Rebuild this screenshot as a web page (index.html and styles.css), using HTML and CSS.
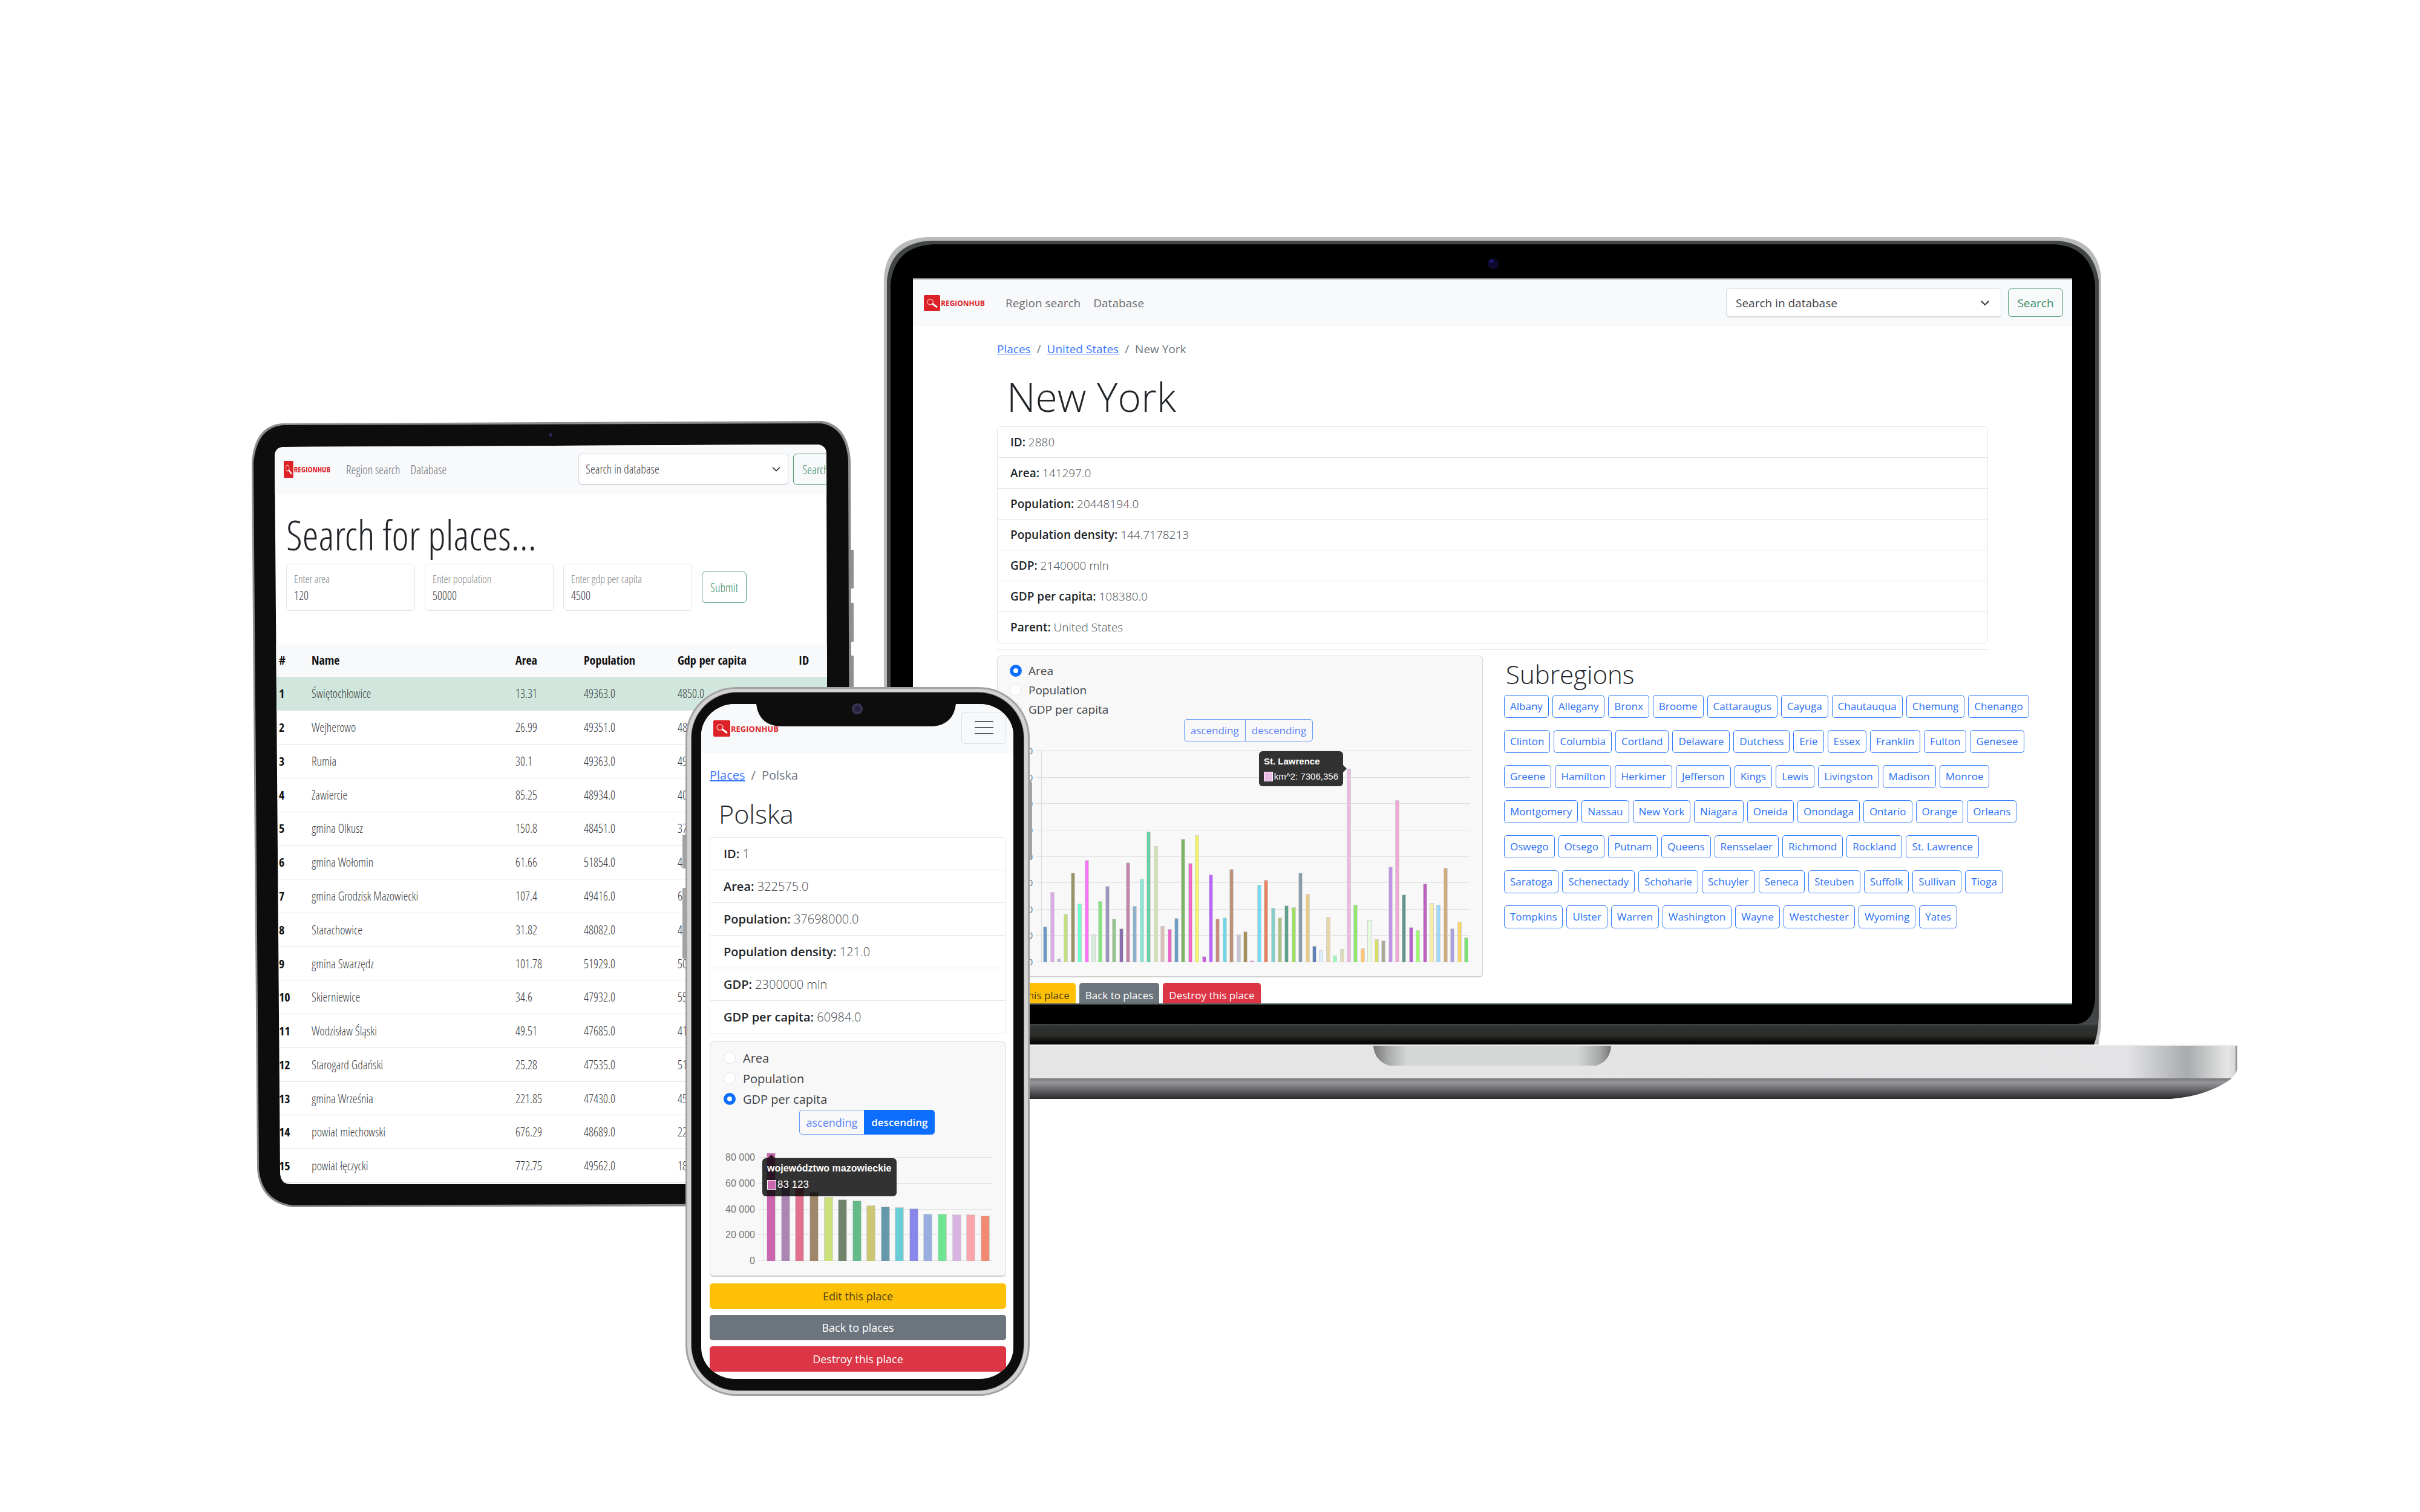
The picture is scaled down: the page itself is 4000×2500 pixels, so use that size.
FILE: index.html
```html
<!DOCTYPE html>
<html lang="en">
<head>
<meta charset="utf-8">
<title>RegionHub</title>
<link rel="stylesheet" href="styles.css">
</head>
<body>
<svg class="defs" width="0" height="0" aria-hidden="true">
  <symbol id="mark" viewBox="0 0 28 28" preserveAspectRatio="none">
    <rect width="28" height="28" rx="2" fill="#dc2127"/>
    <circle cx="11" cy="12" r="5" fill="none" stroke="#f3b9b4" stroke-width="1.4"/>
    <path d="M15 15.500L22 21" stroke="#fff" stroke-width="3" stroke-linecap="round"/>
  </symbol>
</svg>
<main class="stage">

<section class="device laptop">
  <svg class="frame" viewBox="0 0 2240 1426" preserveAspectRatio="none" aria-hidden="true">
    <defs>
      <linearGradient id="hinge" x1="0" y1="0" x2="0" y2="1"><stop offset="0" stop-color="#4c4e4e"/><stop offset=".12" stop-color="#303434"/><stop offset=".55" stop-color="#2b2c26"/><stop offset=".8" stop-color="#0c0c0a"/><stop offset="1" stop-color="#000"/></linearGradient>
      <linearGradient id="deck" x1="0" y1="0" x2="1" y2="0"><stop offset="0" stop-color="#e6e6e6"/><stop offset=".919" stop-color="#e3e3e5"/><stop offset=".963" stop-color="#a8abac"/><stop offset=".993" stop-color="#e6e6e6"/><stop offset=".998" stop-color="#d8d8d8"/><stop offset="1" stop-color="#777"/></linearGradient>
      <linearGradient id="under" x1="0" y1="0" x2="0" y2="1"><stop offset="0" stop-color="#76757a"/><stop offset=".2" stop-color="#96979c"/><stop offset=".5" stop-color="#6f6f72"/><stop offset="1" stop-color="#26282a"/></linearGradient>
      <linearGradient id="thumb" x1="0" y1="0" x2="1" y2="0"><stop offset="0" stop-color="#777"/><stop offset=".06" stop-color="#a8a9a9"/><stop offset=".14" stop-color="#d5d7d6"/><stop offset=".86" stop-color="#d5d7d6"/><stop offset=".95" stop-color="#a8a9a9"/><stop offset="1" stop-color="#777"/></linearGradient>
    </defs>
    <path d="M1 1338V66Q6 4 72 0H1944Q2006 4 2013 66V1300Q2013 1320 2004 1338Z" fill="#b9bab9"/>
    <path d="M6 1338V72Q12 10 78 6H1940Q2000 10 2009 72V1290Q2009 1315 2000 1338Z" fill="#414545"/>
    <rect x="8" y="1300" width="2000" height="37" fill="url(#hinge)"/>
    <path d="M2009 1290Q2009 1315 2000 1338H2009Z" fill="#b9bab9"/>
    <path d="M12 1260V78Q18 16 82 12H1936Q1996 16 2003 78V1260Q2000 1298 1974 1301H40Q12 1296 12 1260Z" fill="#000"/>
    <path d="M49 69H1965" stroke="#8b8389" stroke-width="2"/>
    <path d="M49 1268H1965" stroke="#566161" stroke-width="2"/>
    <ellipse cx="1008" cy="44" rx="9" ry="9" fill="#0d0a2e"/>
    <ellipse cx="1005" cy="40" rx="4" ry="3" fill="#1d1866"/>
    <path d="M0 1336H2238V1376Q2234 1388 2226 1392H0Z" fill="url(#deck)"/>
    <path d="M0 1336H2238" stroke="#f4f0f2" stroke-width="2"/>
    <path d="M0 1391H2229Q2190 1420 2128 1425H0Z" fill="url(#under)"/>
    <path d="M810 1337H1203Q1202 1362 1178 1370H836Q812 1362 810 1337Z" fill="url(#thumb)"/>
  </svg>
  <div class="screen">
    <nav class="nav">
      <a class="brand" href="#"><svg class="mark"><use href="#mark"/></svg>REGIONHUB</a>
      <a class="navlink" href="#">Region search</a>
      <a class="navlink" href="#">Database</a>
      <form class="find">
        <select class="select" aria-label="Search in database"><option>Search in database</option></select>
        <button class="outline green" type="button">Search</button>
      </form>
    </nav>
    <div class="page">
      <nav class="crumbs"><a href="#">Places</a><span>/</span><a href="#">United States</a><span>/</span><span>New York</span></nav>
      <h1 class="title">New York</h1>
      <ul class="facts">
        <li><b>ID:</b> 2880</li>
        <li><b>Area:</b> 141297.0</li>
        <li><b>Population:</b> 20448194.0</li>
        <li><b>Population density:</b> 144.7178213</li>
        <li><b>GDP:</b> 2140000 mln</li>
        <li><b>GDP per capita:</b> 108380.0</li>
        <li><b>Parent:</b> United States</li>
      </ul>
      <hr class="rule">
      <div class="columns">
        <div class="card">
          <label class="pick"><input type="radio" name="l" checked>Area</label>
          <label class="pick"><input type="radio" name="l">Population</label>
          <label class="pick"><input type="radio" name="l">GDP per capita</label>
          <div class="sort"><button type="button">ascending</button><button type="button">descending</button></div>
          <div class="chart">
            <ol class="ticks"><li>8 000</li><li>7 000</li><li>6 000</li><li>5 000</li><li>4 000</li><li>3 000</li><li>2 000</li><li>1 000</li><li>0</li></ol>
            <div class="plot" id="counties"></div>
            <div class="tip"><b>St. Lawrence</b><span><i></i>km^2: 7306,356</span></div>
          </div>
        </div>
        <div class="regions">
          <h2>Subregions</h2>
          <div class="tags"><a href="#">Albany</a><a href="#">Allegany</a><a href="#">Bronx</a><a href="#">Broome</a><a href="#">Cattaraugus</a><a href="#">Cayuga</a><a href="#">Chautauqua</a><a href="#">Chemung</a><a href="#">Chenango</a></div>
          <div class="tags"><a href="#">Clinton</a><a href="#">Columbia</a><a href="#">Cortland</a><a href="#">Delaware</a><a href="#">Dutchess</a><a href="#">Erie</a><a href="#">Essex</a><a href="#">Franklin</a><a href="#">Fulton</a><a href="#">Genesee</a></div>
          <div class="tags"><a href="#">Greene</a><a href="#">Hamilton</a><a href="#">Herkimer</a><a href="#">Jefferson</a><a href="#">Kings</a><a href="#">Lewis</a><a href="#">Livingston</a><a href="#">Madison</a><a href="#">Monroe</a></div>
          <div class="tags"><a href="#">Montgomery</a><a href="#">Nassau</a><a href="#">New York</a><a href="#">Niagara</a><a href="#">Oneida</a><a href="#">Onondaga</a><a href="#">Ontario</a><a href="#">Orange</a><a href="#">Orleans</a></div>
          <div class="tags"><a href="#">Oswego</a><a href="#">Otsego</a><a href="#">Putnam</a><a href="#">Queens</a><a href="#">Rensselaer</a><a href="#">Richmond</a><a href="#">Rockland</a><a href="#">St. Lawrence</a></div>
          <div class="tags"><a href="#">Saratoga</a><a href="#">Schenectady</a><a href="#">Schoharie</a><a href="#">Schuyler</a><a href="#">Seneca</a><a href="#">Steuben</a><a href="#">Suffolk</a><a href="#">Sullivan</a><a href="#">Tioga</a></div>
          <div class="tags"><a href="#">Tompkins</a><a href="#">Ulster</a><a href="#">Warren</a><a href="#">Washington</a><a href="#">Wayne</a><a href="#">Westchester</a><a href="#">Wyoming</a><a href="#">Yates</a></div>
        </div>
      </div>
      <div class="actions"><button class="edit" type="button">Edit this place</button><button class="back" type="button">Back to places</button><button class="destroy" type="button">Destroy this place</button></div>
    </div>
  </div>
</section>

<section class="device tablet">
  <svg class="frame" viewBox="0 0 996 1302" preserveAspectRatio="none" aria-hidden="true">
    <path d="M984 213h11v64h-11zM984 301h11v64h-11zM984 388h11v64h-11z" fill="#8f9090"/>
    <path d="M0 70Q4 8 50 4L942 0Q986 6 990 66L994 1240Q990 1295 940 1298L66 1300Q14 1292 9 1238Z" fill="#8c8d8d"/>
    <path d="M3 70Q8 11 52 7L940 4Q982 9 986 66L990 1240Q986 1291 940 1294L68 1297Q18 1290 12 1238Z" fill="#0d0d0d"/>
    <ellipse cx="494" cy="23" rx="3" ry="3" fill="#25224f"/>
  </svg>
  <div class="screen">
    <nav class="nav">
      <a class="brand" href="#"><svg class="mark"><use href="#mark"/></svg>REGIONHUB</a>
      <a class="navlink" href="#">Region search</a>
      <a class="navlink" href="#">Database</a>
      <form class="find">
        <select class="select" aria-label="Search in database"><option>Search in database</option></select>
        <button class="outline green" type="button">Search</button>
      </form>
    </nav>
    <h1 class="title">Search for places...</h1>
    <form class="query">
      <label class="field">Enter area<input type="text" value="120"></label>
      <label class="field">Enter population<input type="text" value="50000"></label>
      <label class="field">Enter gdp per capita<input type="text" value="4500"></label>
      <button class="outline green" type="button">Submit</button>
    </form>
    <table class="places">
      <colgroup><col class="c-no"><col class="c-name"><col class="c-area"><col class="c-pop"><col class="c-gdp"><col></colgroup>
      <thead><tr><th>#</th><th>Name</th><th>Area</th><th>Population</th><th>Gdp per capita</th><th>ID</th></tr></thead>
      <tbody>
        <tr class="hit"><th>1</th><td>Świętochłowice</td><td>13.31</td><td>49363.0</td><td>4850.0</td><td></td></tr>
        <tr><th>2</th><td>Wejherowo</td><td>26.99</td><td>49351.0</td><td>48</td><td></td></tr>
        <tr><th>3</th><td>Rumia</td><td>30.1</td><td>49363.0</td><td>49</td><td></td></tr>
        <tr><th>4</th><td>Zawiercie</td><td>85.25</td><td>48934.0</td><td>40</td><td></td></tr>
        <tr><th>5</th><td>gmina Olkusz</td><td>150.8</td><td>48451.0</td><td>37</td><td></td></tr>
        <tr><th>6</th><td>gmina Wołomin</td><td>61.66</td><td>51854.0</td><td>4</td><td></td></tr>
        <tr><th>7</th><td>gmina Grodzisk Mazowiecki</td><td>107.4</td><td>49416.0</td><td>6</td><td></td></tr>
        <tr><th>8</th><td>Starachowice</td><td>31.82</td><td>48082.0</td><td>4</td><td></td></tr>
        <tr><th>9</th><td>gmina Swarzędz</td><td>101.78</td><td>51929.0</td><td>50</td><td></td></tr>
        <tr><th>10</th><td>Skierniewice</td><td>34.6</td><td>47932.0</td><td>55</td><td></td></tr>
        <tr><th>11</th><td>Wodzisław Śląski</td><td>49.51</td><td>47685.0</td><td>41</td><td></td></tr>
        <tr><th>12</th><td>Starogard Gdański</td><td>25.28</td><td>47535.0</td><td>51</td><td></td></tr>
        <tr><th>13</th><td>gmina Września</td><td>221.85</td><td>47430.0</td><td>45</td><td></td></tr>
        <tr><th>14</th><td>powiat miechowski</td><td>676.29</td><td>48689.0</td><td>22</td><td></td></tr>
        <tr><th>15</th><td>powiat łęczycki</td><td>772.75</td><td>49562.0</td><td>18</td><td></td></tr>
      </tbody>
    </table>
  </div>
</section>

<section class="device phone">
  <svg class="frame" viewBox="0 0 578 1172" preserveAspectRatio="none" aria-hidden="true">
    <path d="M0 246q0-2 3-2h8v56H0zM0 334q0-2 3-2h8v117H0zM568 156h7q3 0 3 3v122q0 3-3 3h-7z" fill="#a3a3a3"/>
    <rect x="5" y="0" width="569" height="1172" rx="84" fill="#a2a2a2"/>
    <rect x="8" y="3" width="563" height="1166" rx="81" fill="#d3d3d3"/>
    <rect x="14" y="8" width="551" height="1156" rx="76" fill="#8d8d8d"/>
    <rect x="15" y="9" width="549" height="1154" rx="75" fill="#0d0d0d"/>
  </svg>
  <div class="screen">
    <nav class="nav">
      <a class="brand" href="#"><svg class="mark"><use href="#mark"/></svg>REGIONHUB</a>
      <button class="burger" type="button" aria-label="Menu"><span></span><span></span><span></span></button>
    </nav>
    <div class="page">
      <nav class="crumbs"><a href="#">Places</a><span>/</span><span>Polska</span></nav>
      <h1 class="title">Polska</h1>
      <ul class="facts">
        <li><b>ID:</b> 1</li>
        <li><b>Area:</b> 322575.0</li>
        <li><b>Population:</b> 37698000.0</li>
        <li><b>Population density:</b> 121.0</li>
        <li><b>GDP:</b> 2300000 mln</li>
        <li><b>GDP per capita:</b> 60984.0</li>
      </ul>
      <div class="card">
        <label class="pick"><input type="radio" name="p">Area</label>
        <label class="pick"><input type="radio" name="p">Population</label>
        <label class="pick"><input type="radio" name="p" checked>GDP per capita</label>
        <div class="sort"><button type="button">ascending</button><button class="on" type="button">descending</button></div>
        <div class="chart">
          <ol class="ticks"><li>80 000</li><li>60 000</li><li>40 000</li><li>20 000</li><li>0</li></ol>
          <div class="plot" id="voivodeships"></div>
          <div class="tip"><b>województwo mazowieckie</b><span><i></i>83 123</span></div>
        </div>
      </div>
      <div class="actions"><button class="edit" type="button">Edit this place</button><button class="back" type="button">Back to places</button><button class="destroy" type="button">Destroy this place</button></div>
    </div>
  </div>
  <svg class="notch" viewBox="0 0 330 38" preserveAspectRatio="none" aria-hidden="true">
    <path d="M0 0H330Q326 34 292 37H38Q4 34 0 0Z" fill="#0d0d0d"/>
    <circle cx="167" cy="8" r="9" fill="#3a3654"/><circle cx="167" cy="8" r="6" fill="#2a2545"/><circle cx="167" cy="8" r="1" fill="#0b0918"/>
  </svg>
</section>

</main>
<script src="charts.js"></script>
</body>
</html>
```
FILE: charts.js
```js
// Each entry: area in km², bar colour
const counties = [
  [1357,'#6a9ac4'],[2660,'#dfa8e8'],[127,'#b9b9e0'],[1828,'#c3e080'],[3375,'#989468'],[2208,'#6effd0'],[3864,'#fb73fb'],[1050,'#d5eedd'],
  [2308,'#83e680'],[2878,'#9a96bf'],[1656,'#92c68c'],[1276,'#8a6dab'],[3783,'#c285a8'],[2118,'#8eb0cb'],[3158,'#8be5d8'],[4941,'#67cfa6'],
  [4380,'#cfe3b9'],[1367,'#d8c0b8'],[1258,'#e668c2'],[1674,'#6fa0c4'],[4661,'#7fb465'],[3747,'#ef66c4'],[4796,'#f3f46c'],[226,'#cc60dc'],
  [3312,'#bb66fb'],[1638,'#c48e82'],[1692,'#72d6ea'],[3520,'#bb917a'],[1050,'#c6c4d4'],[1158,'#a98f5c'],[72,'#ee94d8'],[2932,'#76dcf5'],
  [3113,'#e5835f'],[2063,'#86cfc8'],[1692,'#adc485'],[2154,'#62a08e'],[2090,'#9bdf5a'],[3375,'#889eac'],[2588,'#e9cb8c'],[615,'#5f7fba'],
  [452,'#dbeefa'],[1710,'#e7d7a6'],[253,'#9bf9b9'],[498,'#dcdab8'],[7306,'#e9bae2'],[2163,'#8de66d'],[525,'#fdc471'],[1602,'#e6fbdb'],
  [869,'#d7de66'],[824,'#aaa898'],[3620,'#c093e6'],[6127,'#f2a8d4'],[2561,'#61958c'],[1330,'#b75fce'],[1213,'#9df970'],[2977,'#bc60c2'],
  [2244,'#f6eca2'],[2172,'#9cd8fb'],[3566,'#d2aa80'],[1276,'#aba0e2'],[1529,'#f8d367'],[941,'#78e26e']
];

// Each entry: GDP per capita, bar colour
const voivodeships = [
  [83123,'#c966ad'],[62000,'#ab86b4'],[58000,'#e26f8e'],[53000,'#a0866b'],[49500,'#cbe27a'],[47600,'#6f8468'],[46500,'#64bb88'],[42700,'#cbc774'],
  [42100,'#6698ac'],[41300,'#6accd6'],[40600,'#8a87ec'],[36400,'#99aee0'],[36400,'#6fe491'],[35600,'#d8b2e0'],[35600,'#f9a5a9'],[35100,'#f08a72']
];

function draw(id, data, top, lines) {
  const plot = document.getElementById(id);
  const grid = document.createElement('div');
  grid.className = 'grid';
  for (let i = 0; i < lines; i++) grid.append(document.createElement('i'));
  plot.append(grid);
  for (const [value, colour] of data) {
    const bar = document.createElement('div');
    bar.className = 'bar';
    bar.style.height = (value / top * 100) + '%';
    bar.style.background = colour;
    plot.append(bar);
  }
}
draw('counties', counties, 8000, 9);
draw('voivodeships', voivodeships, 80000, 5);
```
FILE: styles.css
```css
*{box-sizing:border-box}
body{margin:0;background:#fff;color:#212529;font-family:"Open Sans","Noto Sans",sans-serif;font-size:18px}
h1,h2,ul,ol{margin:0;padding:0;font-weight:300}
ul,ol{list-style:none}
button,input,select{font:inherit;color:inherit}
button{padding:0}
.defs{position:absolute}
.stage{position:relative;min-height:2500px;overflow:hidden}
.device{position:absolute}
.frame{position:absolute;inset:0;width:100%;height:100%;overflow:visible}
.screen{position:relative;height:100%;background:#fff;overflow:hidden}

.nav{display:flex;align-items:center;background:#f8f9fb}
.brand{display:flex;align-items:center;gap:1px;color:#dc2127;font-weight:700;text-decoration:none}
.mark{display:block}
.navlink{color:#6b6d70;text-decoration:none;white-space:nowrap}
.find{display:flex;gap:11px;margin-left:auto}
.select{appearance:none;border:1px solid #d5d9dd;border-bottom-width:2px;border-radius:6px;background:#fff url("data:image/svg+xml,%3Csvg xmlns='http://www.w3.org/2000/svg' viewBox='0 0 16 16'%3E%3Cpath fill='none' stroke='%23343a40' stroke-width='2' stroke-linecap='round' stroke-linejoin='round' d='m2 5 6 6 6-6'/%3E%3C/svg%3E") no-repeat right 18px center/16px 16px;color:#3f4347}
.outline{background:none;border:1px solid;border-radius:6px}
.green{color:#3b8c62;border-color:#4f9a72}
.crumbs{display:flex;gap:10px;color:#6c757d}
.crumbs a{color:#3a76fd}
.facts{border:1px solid #e3e5e7;border-radius:6px}
.facts li{border-bottom:1px solid #e3e5e7;color:#44474a}
.facts li:last-child{border-bottom:0}
.facts b{color:#212529;font-weight:600}
.card{border:1px solid #d9dadb;border-bottom:2px solid #cfcfcf;border-radius:6px;background:#f8f8f8}
.pick{display:flex;align-items:center;color:#3f4347}
.pick input{appearance:none;margin:0;width:20px;height:20px;border:1px solid #e2e4e6;border-radius:50%;background:#fff}
.pick input:checked{border:6px solid #0d6efd}
.sort{display:flex;justify-content:center}
.sort button{border:1px solid #6a9cf8;background:none;color:#5b84f8}
.sort button:first-child{border-radius:5px 0 0 5px}
.sort button:last-child{border-radius:0 5px 5px 0;margin-left:-1px}
.sort .on{background:#0d6efd;border-color:#0d6efd;color:#fff;font-weight:600}
.chart{position:relative;display:flex;gap:14px}
.ticks{display:flex;flex-direction:column;justify-content:space-between;text-align:right;color:#777;font-family:"Liberation Sans",sans-serif;white-space:nowrap}
.ticks li{height:1px;line-height:1px}
.plot{position:relative;flex:1;display:flex;align-items:flex-end;justify-content:space-around;border-left:1px solid #dcdcdc}
.grid{position:absolute;inset:0 0 0 -10px;display:flex;flex-direction:column;justify-content:space-between}
.grid i{height:1px;background:#dedede}
.bar{position:relative;border:1px solid #d3d3d3;border-bottom:0}
.tip{position:absolute;display:flex;flex-direction:column;border-radius:6px;background:rgba(0,0,0,.8);color:#fff;font-family:"Liberation Sans",sans-serif;white-space:nowrap}
.tip span{display:flex;align-items:center;gap:2px}
.tip i{width:15px;height:16px;border:1px solid #fff}
.tip::after{content:"";position:absolute;border:6px solid transparent}
.actions{display:flex}
.actions button{border:0;border-radius:5px;color:#fff}
.actions .edit{background:#ffc107;color:#4d3f12}
.actions .back{background:#6c757d}
.actions .destroy{background:#dc3545}

/* laptop */
.laptop{left:36.5%;top:392px;width:56%;height:1426px;padding:70px 275px 159px 49px;font-size:19px}
.laptop .nav{height:78px;padding:0 15px 0 18px}
.laptop .brand{font-size:12px;margin-right:34px}
.laptop .mark{width:27px;height:26px}
.laptop .navlink{margin-right:21px}
.laptop .select{width:455px;height:48px;padding:0 15px}
.laptop .find .outline{width:91px;height:47px}
.laptop .page{padding:22px 139px 0}
.laptop .crumbs{line-height:30px}
.laptop .title{margin:22px 0 9px 16px;font-size:66px;line-height:82px}
.laptop .facts li{height:51px;line-height:51px;padding-left:21px}
.rule{height:1px;margin:9px 0 10px;border:0;background:#e0e2e4}
.columns{display:grid;grid-template-columns:803px 1fr;gap:35px}
.laptop .card{padding:8px 20px 23px 20px}
.laptop .pick{height:32px;gap:11px}
.laptop .sort{margin-left:28px}
.laptop .sort button{height:37px;padding:0 10px;font-size:17px}
.laptop .chart{height:350px;margin-top:15px}
.laptop .ticks{width:38px;font-size:15px}
.laptop .bar{width:7px}
.laptop .tip{left:412px;top:1px;width:139px;height:58px;padding:8px;font-size:15px;line-height:17px;gap:8px}
.laptop .tip i{background:#e9bae2}
.laptop .tip::after{left:100%;top:23px;border-left-color:rgba(0,0,0,.8)}
.regions h2{margin:6px 0 9px 3px;font-size:42px;line-height:50px}
.tags{display:flex;gap:6px;margin-bottom:20px}
.tags a{height:38px;padding:0 9px;border:1px solid #2f7bfd;border-radius:5px;color:#2a6ff5;font-size:17px;line-height:35px;text-decoration:none;white-space:nowrap}
.laptop .actions{gap:6px;margin-top:9px}
.laptop .actions button{height:40px;padding:0 10px;font-size:17px}

/* tablet */
.tablet{left:10.4%;top:696px;width:24.9%;height:1302px;padding:39px 42px 40px 38px;font-family:"Open Sans Condensed Light","Open Sans",sans-serif;font-size:20px}
.tablet .screen{clip-path:path("M0 20Q0 4 16 4L898 0Q912 2 912 16L915 1223H27Q10 1223 9 1205Z")}
.tablet .nav{height:82px;padding-left:15px}
.tablet .brand{width:77px;font-family:"Open Sans Condensed","Open Sans",sans-serif;font-size:13px;margin-right:26px}
.tablet .mark{width:20px;height:28px}
.tablet .navlink{margin-right:17px}
.tablet .find{gap:8px;margin:0 -15px 0 auto}
.tablet .select{width:347px;height:52px;padding:0 11px;background-size:14px 14px;background-position:right 12px center}
.tablet .outline{width:74px;height:52px}
.tablet .title{margin:25px 0 0 19px;font-size:68px;line-height:84px}
.query{display:flex;align-items:center;gap:16px;margin:6px 0 54px 19px}
.field{display:flex;flex-direction:column;width:213px;height:78px;padding:10px 12px 0;border:1px solid #e1e4e7;border-radius:6px;color:#7d8186;font-size:18px;line-height:28px}
.field input{width:100%;height:28px;padding:0;border:0;background:none;color:#3f4347;font-size:20px}
.places{width:100%;height:892px;border-collapse:collapse;table-layout:fixed}
.places col.c-no{width:54px}
.places col.c-name{width:337px}
.places col.c-area{width:113px}
.places col.c-pop{width:155px}
.places col.c-gdp{width:200px}
.places th,.places td{padding:0 0 0 7px;border-bottom:1px solid #dee2e6;text-align:left;white-space:nowrap}
.places th{color:#111;font-family:"Open Sans Condensed","Open Sans",sans-serif;font-weight:700}
.places td{color:#3a3d41}
.places thead th{height:55px;background:#f8f9fb}
.places .hit th,.places .hit td{background:#d1e7dd}

/* phone */
.phone{left:28.2%;top:1136px;width:14.45%;height:1172px;padding:28px 31px;font-size:20px}
.phone .screen{border-radius:56px/52px}
.phone .nav{height:81px;padding:0 12px 0 20px;justify-content:space-between}
.phone .brand{font-size:13px}
.phone .mark{width:28px;height:27px}
.burger{display:flex;flex-direction:column;justify-content:center;align-items:center;gap:8px;width:74px;height:53px;border:1px solid #dcdee0;border-radius:6px;background:none;margin-bottom:3px}
.burger span{width:31px;height:2px;background:#595b5e}
.phone .page{padding:22px 12px 0 14px}
.phone .crumbs{line-height:30px}
.phone .title{margin:20px 0 9px 15px;font-size:43px;line-height:58px}
.phone .facts li{height:54px;line-height:54px;padding-left:22px}
.phone .card{height:389px;margin-top:12px;padding:9px 22px 0}
.phone .pick{height:34px;gap:12px}
.phone .sort{margin:1px 0 0 30px}
.phone .sort button{height:41px;padding:0 11px;font-size:18px}
.phone .sort .on{font-size:17px}
.phone .chart{height:172px;margin-top:37px}
.phone .ticks{width:52px;font-size:16px}
.phone .bar{width:15px}
.phone .tip{left:64px;top:2px;width:222px;height:63px;padding:8px;gap:9px;font-size:17px;line-height:18px}
.phone .tip b{font-size:16px}
.phone .tip i{background:#c966ad}
.phone .tip::after{left:9px;bottom:100%;border-bottom-color:rgba(0,0,0,.8)}
.phone .actions{flex-direction:column;gap:10px;margin-top:11px}
.phone .actions button{height:42px;font-size:18px}
.notch{position:absolute;left:122px;top:28px;width:330px;height:38px;overflow:visible}
```
